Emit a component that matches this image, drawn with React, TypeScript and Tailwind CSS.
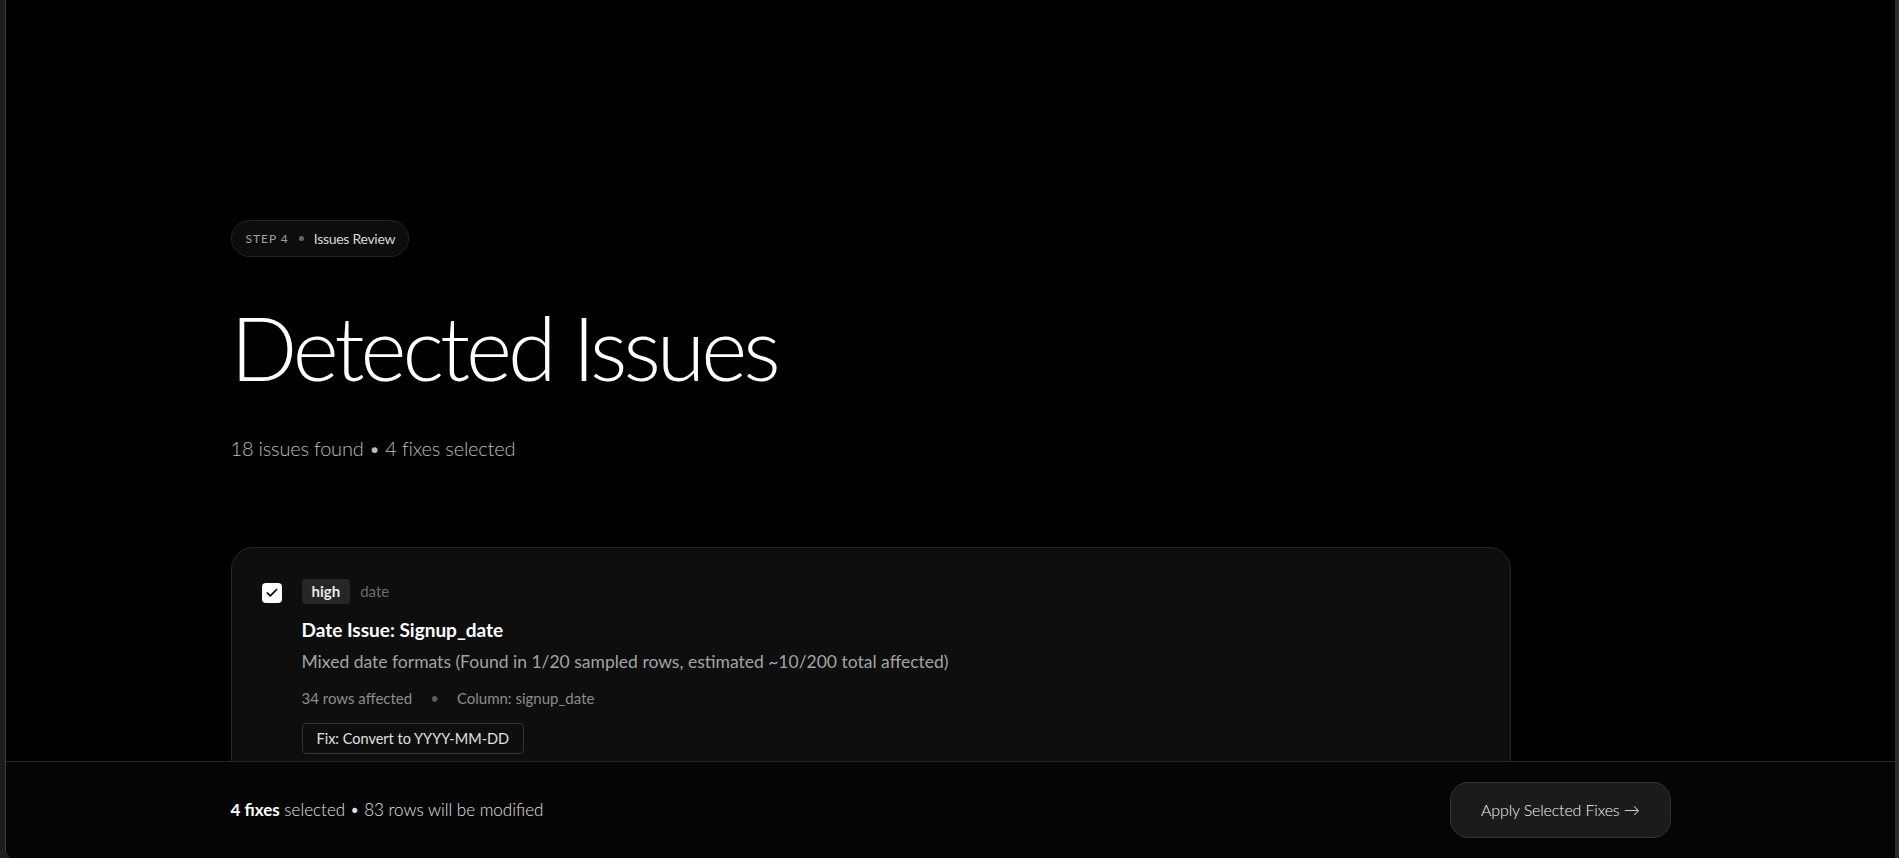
const font = { fontFamily: "Lato, 'Open Sans', sans-serif" };

const IssueCard = () => {
  return (
    <div className="w-full max-w-[1280px] rounded-[22px] border border-[#262626] bg-[#0e0e0e] pl-[30px] pr-8 pt-[31px] pb-10">
      <div className="flex gap-5">
        <div className="mt-[4px] flex h-5 w-5 shrink-0 items-center justify-center rounded-[4px] bg-white">
          <svg width="14" height="14" viewBox="0 0 24 24" fill="none" stroke="#000" strokeWidth="3" strokeLinecap="round" strokeLinejoin="round">
            <path d="M20 6 9 17l-5-5" />
          </svg>
        </div>
        <div className="flex flex-col">
          <div className="flex h-[25px] items-center gap-[10px]">
            <span className="flex h-[25px] items-center rounded-[4px] bg-[#262626] px-[10px] text-[15px] font-bold text-[#e8e8e8]">
              high
            </span>
            <span className="text-[15px] text-[#6b6b6b]">date</span>
          </div>
          <h3 className="mt-[13px] text-[19px] leading-[1.4] font-bold text-white">Date Issue: Signup_date</h3>
          <p className="mt-[5px] text-[17.5px] leading-[1.5] text-[#a3a3a3]">
            Mixed date formats (Found in 1/20 sampled rows, estimated ~10/200 total affected)
          </p>
          <div className="mt-[12px] flex items-center text-[15px] leading-[1.5] text-[#8c8c8c]">
            <span>34 rows affected</span>
            <span className="mx-[18px] text-[#5a5a5a]">•</span>
            <span>Column: signup_date</span>
          </div>
          <div className="mt-[14px]">
            <button className="h-[31px] rounded-[4px] border border-[#333333] px-[14px] text-[14.5px] text-[#e0e0e0]">
              Fix: Convert to YYYY-MM-DD
            </button>
          </div>
        </div>
      </div>
    </div>
  );
};

export default function App() {
  return (
    <div className="flex h-[858px] w-full overflow-hidden bg-[#1c1e1e]" style={font}>
      <div className="w-[5px] shrink-0" />
      <div className="relative flex-1 overflow-hidden rounded-bl-[8px] border-l border-[#3c3c3c] bg-black">
        <div className="mx-auto w-full max-w-[1440px] pt-[220px]">
          {/* step badge */}
          <div className="inline-flex h-[37px] items-center gap-[10px] rounded-full border border-[#262626] bg-[#0d0d0d] pl-[14px] pr-[13px]">
            <span className="text-[12px] tracking-[0.08em] text-[#a0a0a0] uppercase">Step 4</span>
            <span className="h-[5px] w-[5px] rounded-full bg-[#666666]" />
            <span className="text-[14px] tracking-[-0.02em] text-[#d8d8d8]">Issues Review</span>
          </div>

          <h1 className="mt-[46px] text-[88px] leading-none font-light tracking-[-0.045em] text-white">
            Detected Issues
          </h1>

          <p className="mt-[42px] text-[20px] leading-[1.5] font-light tracking-[-0.01em] text-[#bdbdbd]">
            18 issues found • 4 fixes selected
          </p>

          <div className="mt-[84px]">
            <IssueCard />
          </div>
        </div>

        {/* sticky footer */}
        <div className="absolute right-0 bottom-0 left-0 h-[97px] border-t border-[#262626] bg-[#050505]">
          <div className="mx-auto flex h-full w-full max-w-[1440px] items-center justify-between">
            <p className="text-[17px] font-light text-[#e0e0e0]">
              <span className="font-bold text-white">4 fixes</span> selected • 83 rows will be modified
            </p>
            <button className="h-[56px] rounded-[18px] border border-[#333333] bg-[#1b1b1b] px-[30px] text-[16px] font-light tracking-[-0.01em] text-[#f2f2f2]">
              Apply Selected Fixes →
            </button>
          </div>
        </div>
      </div>
      <div className="relative w-[4px] shrink-0 bg-[#2c2c2c]" />
    </div>
  );
}
